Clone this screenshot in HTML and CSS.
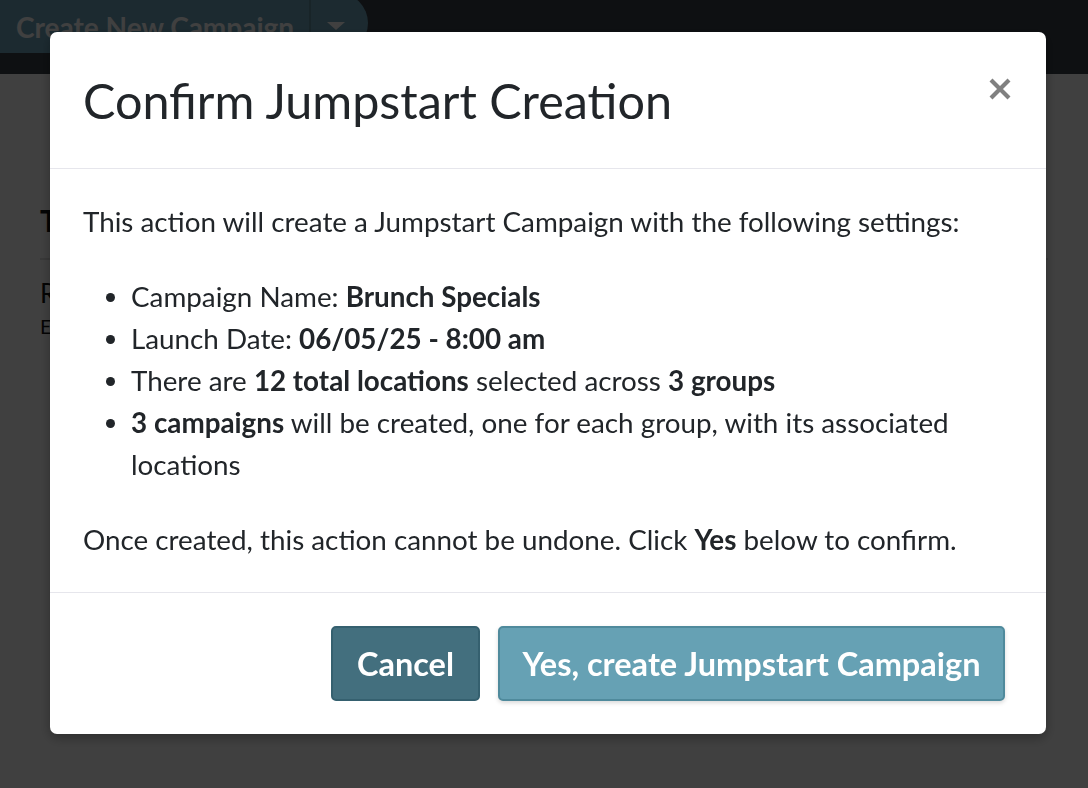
FILE: index.html
```html
<!DOCTYPE html>
<html lang="en">
<head>
<meta charset="utf-8">
<title>Confirm Jumpstart Creation</title>
<link rel="stylesheet" href="styles.css">
</head>
<body>
<div class="page">
  <header class="topbar">
    <div class="split-btn">
      <span class="split-main">Create New Campaign</span>
      <span class="split-caret"></span>
    </div>
  </header>
  <main class="content">
    <h2 class="tab-title">Template Details</h2>
    <div class="content-body">
      <p class="row-title">Recent Campaigns</p>
      <p class="row-sub">Edit or review your existing campaigns</p>
    </div>
  </main>
</div>

<div class="overlay">
  <div class="modal" role="dialog" aria-labelledby="modal-title">
    <div class="modal-header">
      <h1 id="modal-title" class="modal-title">Confirm Jumpstart Creation</h1>
      <button class="close-btn" aria-label="Close">
        <svg width="24" height="24" viewBox="0 0 24 24"><path d="M3 3 L21 21 M21 3 L3 21" stroke="#808080" stroke-width="4.2" stroke-linecap="butt"/></svg>
      </button>
    </div>
    <div class="modal-body">
      <p class="lead">This action will create a Jumpstart Campaign with the following settings:</p>
      <ul class="settings">
        <li>Campaign Name: <strong>Brunch Specials</strong></li>
        <li>Launch Date: <strong>06/05/25 - 8:00 am</strong></li>
        <li>There are <strong>12 total locations</strong> selected across <strong>3 groups</strong></li>
        <li><strong>3 campaigns</strong> will be created, one for each group, with its associated locations</li>
      </ul>
      <p class="note">Once created, this action cannot be undone. Click <strong>Yes</strong> below to confirm.</p>
    </div>
    <div class="modal-footer">
      <button class="btn btn-cancel">Cancel</button>
      <button class="btn btn-confirm">Yes, create Jumpstart Campaign</button>
    </div>
  </div>
</div>
</body>
</html>
```

FILE: styles.css
```css
* { box-sizing: border-box; }
html, body { margin: 0; padding: 0; }
body {
  font-family: Lato, "Open Sans", "Liberation Sans", sans-serif;
  background: #ffffff;
  width: 1088px;
  height: 788px;
  overflow: hidden;
}

.page { width: 1088px; height: 788px; }

.topbar {
  height: 74px;
  background: #384048;
  overflow: hidden;
}
.split-btn {
  display: flex;
  align-items: center;
  width: 368px;
  height: 60px;
  margin-top: -7px;
  background: #70a8c0;
  border-radius: 0 32px 32px 0;
}
.split-main {
  flex: 0 0 311px;
  padding-left: 16px;
  padding-top: 8px;
  color: #ffffff;
  font-weight: 700;
  font-size: 28px;
  white-space: nowrap;
  border-right: 2px solid #60909f;
  height: 100%;
  display: flex;
  align-items: center;
}
.split-caret {
  margin-left: 16px;
  margin-top: 6px;
  width: 0;
  height: 0;
  border-left: 9px solid transparent;
  border-right: 9px solid transparent;
  border-top: 8px solid #ffffff;
}

.content { padding: 0 40px; }
.tab-title {
  margin: 0;
  padding: 128px 0 0;
  height: 186px;
  font-size: 30px;
  font-weight: 700;
  color: #111;
  border-bottom: 2px solid #e0e0e0;
}
.content-body { padding-top: 14px; }
.row-title { margin: 0; font-size: 26px; color: #111; line-height: 38px; }
.row-sub { margin: 0; font-size: 20px; color: #111; line-height: 28px; }

.overlay {
  position: fixed;
  inset: 0;
  background: rgba(0, 0, 0, 0.75);
  padding: 32px 0 0 50px;
}

.modal {
  width: 996px;
  height: 702px;
  background: #ffffff;
  border-radius: 7px;
  display: flex;
  flex-direction: column;
  color: #212529;
  box-shadow: 0 4px 12px rgba(0,0,0,0.3);
}

.modal-header {
  height: 137px;
  display: flex;
  align-items: center;
  justify-content: space-between;
  padding: 0 34px 0 33px;
  border-bottom: 1px solid #e6e6ec;
}
.modal-title {
  margin: 0;
  font-size: 48.5px;
  font-weight: 400;
  line-height: 1.2;
  color: #212529;
}
.close-btn {
  border: 0;
  background: none;
  padding: 0;
  width: 24px;
  height: 24px;
  margin-bottom: 22px;
  display: flex;
}

.modal-body {
  padding: 32px 33px 0 33px;
  font-size: 27.8px;
  line-height: 42px;
  height: 424px;
  border-bottom: 1px solid #e6e6ec;
}
.modal-body p { margin: 0; }
.modal-body strong { font-weight: 700; }
.lead { margin-bottom: 33px !important; }
.settings {
  margin: 0 0 33px;
  padding-left: 48px;
}

.modal-footer {
  flex: 1;
  display: flex;
  justify-content: flex-end;
  align-items: flex-start;
  gap: 18px;
  padding: 33px 41px 0 0;
}
.btn {
  height: 75px;
  font-family: inherit;
  font-size: 32.5px;
  font-weight: 700;
  color: #ffffff;
  border-radius: 5px;
  padding: 0 20px;
  cursor: pointer;
  white-space: nowrap;
}
.btn-cancel {
  width: 149px;
  background: #436f7e;
  border: 2px solid #35606f;
}
.btn-confirm {
  width: 507px;
  background: #66a1b4;
  border: 2px solid #4f8a9c;
  box-shadow: 0 2px 4px rgba(0,0,0,0.15);
}
```
